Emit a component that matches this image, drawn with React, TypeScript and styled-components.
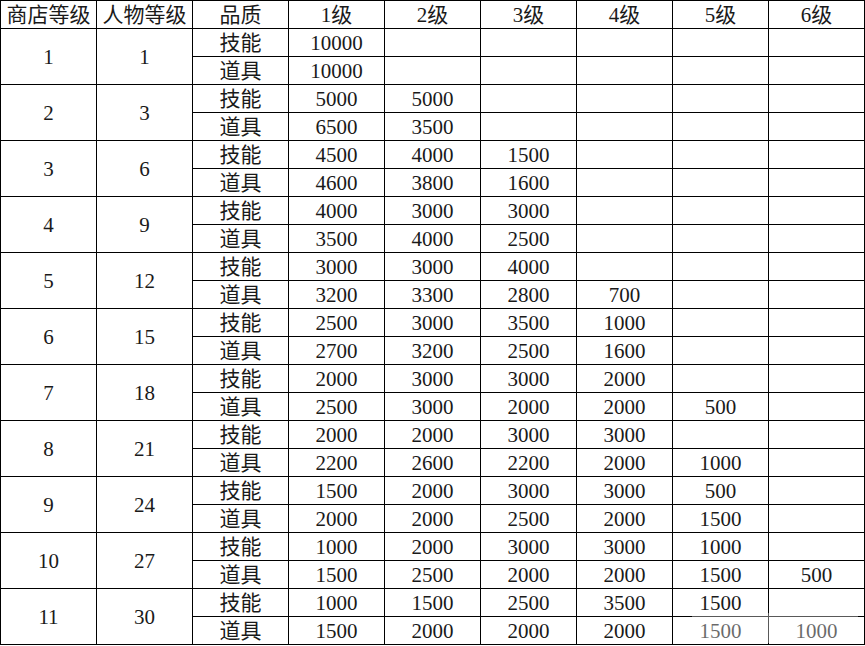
import React from "react";
import styled, { createGlobalStyle } from "styled-components";

type Tier = {
  shop: number;
  role: number;
  skill: number[];
  item: number[];
};

const LEVELS = ["1级", "2级", "3级", "4级", "5级", "6级"];

const tiers: Tier[] = [
  { shop: 1, role: 1, skill: [10000], item: [10000] },
  { shop: 2, role: 3, skill: [5000, 5000], item: [6500, 3500] },
  { shop: 3, role: 6, skill: [4500, 4000, 1500], item: [4600, 3800, 1600] },
  { shop: 4, role: 9, skill: [4000, 3000, 3000], item: [3500, 4000, 2500] },
  { shop: 5, role: 12, skill: [3000, 3000, 4000], item: [3200, 3300, 2800, 700] },
  { shop: 6, role: 15, skill: [2500, 3000, 3500, 1000], item: [2700, 3200, 2500, 1600] },
  { shop: 7, role: 18, skill: [2000, 3000, 3000, 2000], item: [2500, 3000, 2000, 2000, 500] },
  { shop: 8, role: 21, skill: [2000, 2000, 3000, 3000], item: [2200, 2600, 2200, 2000, 1000] },
  { shop: 9, role: 24, skill: [1500, 2000, 3000, 3000, 500], item: [2000, 2000, 2500, 2000, 1500] },
  {
    shop: 10,
    role: 27,
    skill: [1000, 2000, 3000, 3000, 1000],
    item: [1500, 2500, 2000, 2000, 1500, 500],
  },
  {
    shop: 11,
    role: 30,
    skill: [1000, 1500, 2500, 3500, 1500],
    item: [1500, 2000, 2000, 2000, 1500, 1000],
  },
];

const GlobalStyle = createGlobalStyle`
  body {
    margin: 0;
    background: #ffffff;
  }
`;

const Page = styled.div`
  position: relative;
  width: 865px;
  height: 646px;
  overflow: hidden;
  background: #ffffff;
`;

const Table = styled.table`
  width: 865px;
  border-collapse: collapse;
  table-layout: fixed;
  font-family: "Liberation Serif", "Noto Sans CJK SC", serif;
  font-size: 21px;
  color: #1a1a1a;
`;

const Row = styled.tr`
  height: 28px;
`;

const Cell = styled.td`
  border: 1px solid #000000;
  padding: 1px 0 0;
  text-align: center;
  vertical-align: middle;
  line-height: 26px;
  white-space: nowrap;
  overflow: hidden;
`;

const HeadCell = styled(Cell).attrs({ as: "th" })`
  font-weight: normal;
`;

// faint watermark smudge over the bottom-right corner
const Watermark = styled.div`
  position: absolute;
  left: 692px;
  top: 613px;
  width: 166px;
  height: 30px;
  background: rgba(255, 255, 255, 0.35);
  pointer-events: none;
`;

function ValueCells({ values }: { values: number[] }) {
  return (
    <>
      {LEVELS.map((level, i) => (
        <Cell key={level}>{values[i] ?? ""}</Cell>
      ))}
    </>
  );
}

export default function App() {
  return (
    <Page>
      <GlobalStyle />
      <Table>
        <thead>
          <Row>
            <HeadCell>商店等级</HeadCell>
            <HeadCell>人物等级</HeadCell>
            <HeadCell>品质</HeadCell>
            {LEVELS.map((level) => (
              <HeadCell key={level}>{level}</HeadCell>
            ))}
          </Row>
        </thead>
        <tbody>
          {tiers.map((tier) => (
            <React.Fragment key={tier.shop}>
              <Row>
                <Cell rowSpan={2}>{tier.shop}</Cell>
                <Cell rowSpan={2}>{tier.role}</Cell>
                <Cell>技能</Cell>
                <ValueCells values={tier.skill} />
              </Row>
              <Row>
                <Cell>道具</Cell>
                <ValueCells values={tier.item} />
              </Row>
            </React.Fragment>
          ))}
        </tbody>
      </Table>
      <Watermark />
    </Page>
  );
}
